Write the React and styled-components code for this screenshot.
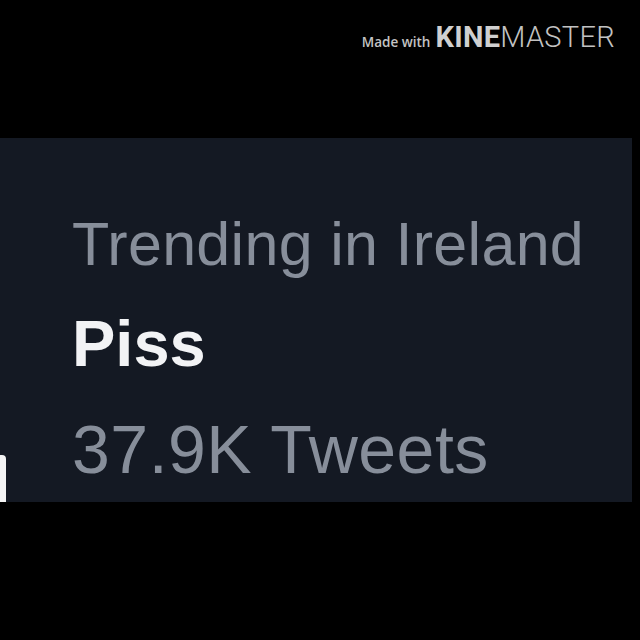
import React from 'react';
import styled, { createGlobalStyle } from 'styled-components';

const GlobalStyle = createGlobalStyle`
  html, body {
    margin: 0;
    padding: 0;
    background: #000;
  }
  body {
    width: 640px;
    height: 640px;
    overflow: hidden;
  }
`;

const Screen = styled.div`
  width: 640px;
  height: 640px;
  background: #000;
  display: flex;
  flex-direction: column;
`;

const TopBar = styled.div`
  height: 138px;
  display: flex;
  justify-content: flex-end;
  align-items: flex-start;
  padding: 20px 25px 0 0;
  box-sizing: border-box;
`;

const Watermark = styled.div`
  display: flex;
  align-items: baseline;
  gap: 5px;
`;

const MadeWith = styled.span`
  font-family: "Open Sans", "Liberation Sans", sans-serif;
  font-weight: 600;
  font-size: 13.5px;
  color: #c4c4c4;
`;

const Brand = styled.span`
  font-family: Roboto, "Liberation Sans", sans-serif;
  font-size: 29px;
  letter-spacing: 0.3px;
  font-weight: ${p => (p.$bold ? 700 : 300)};
  color: ${p => (p.$bold ? '#d0d0d0' : '#c2c2c2')};
`;

const Card = styled.div`
  position: relative;
  width: 632px;
  height: 364px;
  background: #141923;
  box-sizing: border-box;
  padding: 70px 0 0 72px;
  display: flex;
  flex-direction: column;
`;

const Line = styled.div`
  font-family: "Liberation Sans", Arial, sans-serif;
  font-size: ${p => p.$size}px;
  line-height: ${p => p.$lh}px;
  letter-spacing: ${p => p.$track || 0}px;
  font-weight: ${p => (p.$bold ? 700 : 400)};
  color: ${p => (p.$bold ? '#f2f3f5' : '#878e9a')};
  margin-top: ${p => p.$gap || 0}px;
  white-space: nowrap;
`;

const EdgeTab = styled.div`
  position: absolute;
  left: 0;
  bottom: 0;
  width: 6px;
  height: 47px;
  background: #f4f4f4;
  border-top-right-radius: 4px;
`;

export default function App() {
  return (
    <>
      <GlobalStyle />
      <Screen>
        <TopBar>
          <Watermark>
            <MadeWith>Made with</MadeWith>
            <span>
              <Brand $bold>KINE</Brand>
              <Brand>MASTER</Brand>
            </span>
          </Watermark>
        </TopBar>
        <Card>
          <Line $size={61} $lh={72} $track={0.3}>Trending in Ireland</Line>
          <Line $size={65} $lh={80} $gap={24} $bold>Piss</Line>
          <Line $size={68} $lh={80} $gap={25} $track={0.5}>37.9K Tweets</Line>
          <EdgeTab />
        </Card>
      </Screen>
    </>
  );
}
